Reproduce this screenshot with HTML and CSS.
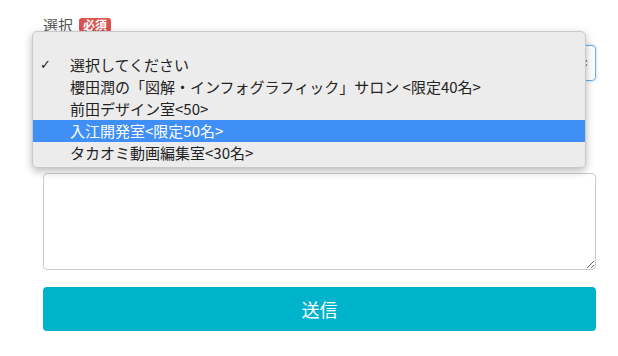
FILE: index.html
```html
<!DOCTYPE html>
<html lang="ja">
<head>
    <meta charset="UTF-8">
    <meta name="viewport" content="width=device-width, initial-scale=1.0">
    <title>申し込み</title>
    <link rel="stylesheet" href="styles.css">
</head>
<body>

    <form class="entry-form">
        <!-- Select field -->
        <div class="form-group">
            <div class="field-label">選択 <span class="badge">必須</span></div>
            <div class="select-wrap">
                <div class="select-box">
                    <svg class="select-arrows" width="8" height="14" viewBox="0 0 8 14">
                        <path d="M4 1 L7.5 5.5 H0.5 Z" fill="#444"/>
                        <path d="M4 13 L7.5 8.5 H0.5 Z" fill="#444"/>
                    </svg>
                </div>

                <!-- Open dropdown -->
                <ul class="select-menu">
                    <li class="option checked">選択してください</li>
                    <li class="option">櫻田潤の「図解・インフォグラフィック」サロン &lt;限定40名&gt;</li>
                    <li class="option">前田デザイン室&lt;50&gt;</li>
                    <li class="option active">入江開発室&lt;限定50名&gt;</li>
                    <li class="option">タカオミ動画編集室&lt;30名&gt;</li>
                </ul>
            </div>
        </div>

        <!-- Message -->
        <div class="form-group message-group">
            <textarea class="message" rows="4"></textarea>
        </div>

        <button type="button" class="submit">送信</button>
    </form>

</body>
</html>
```

FILE: styles.css
```css
* {
    margin: 0;
    padding: 0;
    box-sizing: border-box;
}

body {
    font-family: 'Noto Sans CJK JP', 'Noto Sans', sans-serif;
    background: #fff;
    color: #333;
}

.entry-form {
    width: 596px;
    padding: 13px 0 0 43px;
}

.field-label {
    font-size: 15px;
    line-height: 24px;
    color: #555;
    display: flex;
    align-items: center;
    gap: 6px;
    margin-bottom: 8px;
}

.badge {
    background: #d9534f;
    color: #fff;
    font-size: 12px;
    font-weight: bold;
    line-height: 14px;
    padding: 0 4px;
    border-radius: 3px;
}

.select-wrap {
    position: relative;
}

.select-box {
    height: 36px;
    border: 1px solid #66afe9;
    border-radius: 4px;
    box-shadow: 0 0 3px rgba(102, 175, 233, 0.5);
    display: flex;
    align-items: center;
    justify-content: flex-end;
    padding-right: 7px;
}

.select-menu {
    position: absolute;
    top: -14px;
    left: -11px;
    width: 554px;
    list-style: none;
    background: #ececec;
    border: 1px solid #c9c9c9;
    border-radius: 5px;
    box-shadow: 0 3px 9px rgba(0, 0, 0, 0.28);
    padding: 22px 0 3px;
    z-index: 2;
}

.option {
    position: relative;
    height: 22px;
    line-height: 21px;
    padding-left: 37px;
    font-size: 15px;
    color: #222;
    white-space: nowrap;
}

.option.checked::before {
    content: "✓";
    position: absolute;
    left: 7px;
    font-size: 13px;
    font-family: 'DejaVu Sans', sans-serif;
}

.option.active {
    background: #3f8ff7;
    color: #fff;
}

.message-group {
    margin-top: 92px;
}

.message {
    display: block;
    width: 100%;
    height: 97px;
    border: 1px solid #ccc;
    border-radius: 4px;
    resize: vertical;
    font-family: inherit;
}

.submit {
    display: block;
    width: 100%;
    height: 44px;
    margin-top: 17px;
    background: #00b3cc;
    color: #fff;
    border: none;
    border-radius: 4px;
    font-family: inherit;
    font-size: 18px;
}
```
